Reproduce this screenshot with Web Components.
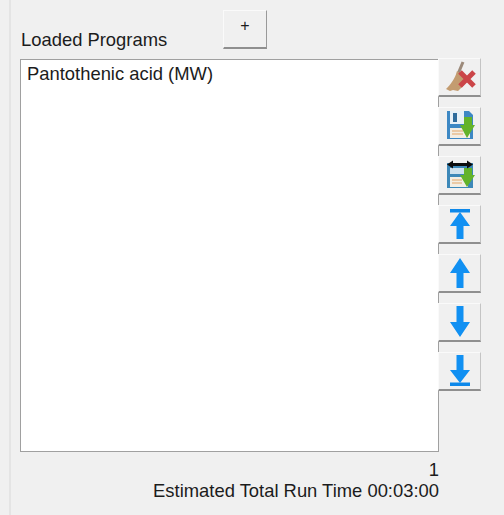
<!DOCTYPE html>
<html>
<head>
<meta charset="utf-8">
<title>Loaded Programs</title>
<style>
  html, body { margin: 0; height: 100%; }
  body { background: #f0f0f0; overflow: hidden; }
  svg { display: block; }
</style>
</head>
<body>
<program-panel>
  <icon-button slot="tools" title="Clear"><svg viewBox="0 0 32 32" width="32" height="32"><path d="M19 1l-5 12" stroke="#9c8a7a" stroke-width="3"/><path d="M13 10l9 7-2 7-6 6-5-1-3 1-4-2C6 24 11 18 13 10z" fill="#c39c70"/><path d="M16 11l14 14M30 11L16 25" stroke="#cb4548" stroke-width="5"/></svg></icon-button>
  <icon-button slot="tools" title="Save"><svg viewBox="0 0 32 32" width="32" height="32"><path d="M3 1h22l4 4v24H3z" fill="#3d88c4"/><path d="M6 1h14v13H6z" fill="#e8f1f7"/><path d="M9 3h4v9H9z" fill="#2f6c9c"/><path d="M6 18h20v10H6z" fill="#f2eee4"/><path d="M8 21h11M8 24h11" stroke="#e3a566"/><path d="M20 7h8v8h3l-8 13-7-13h4z" fill="#63b32a"/></svg></icon-button>
  <icon-button slot="tools" title="Save as"><svg viewBox="0 0 32 32" width="32" height="32"><path d="M3 4h26v25H3z" fill="#3d88b8"/><path d="M6 9h14v6H6z" fill="#cfe2ee"/><path d="M6 18h18v10H6z" fill="#f2eee4"/><path d="M8 21h10M8 24h10" stroke="#e3a566"/><path d="M20 9h8v7h3l-8 12-7-12h4z" fill="#63b32a"/><path d="M3 5.500l6-4v2.500h14V1.500l6 4-6 4V7H9v2.500z" fill="#0c0c0c"/></svg></icon-button>
  <icon-button slot="tools" title="Move to top"><svg viewBox="0 0 32 32" width="32" height="32"><path d="M6 1h20v3.500H6z" fill="#0d88ea"/><path d="M16 4l10 14h-6.500v13h-7V18H6z" fill="#1190f2"/></svg></icon-button>
  <icon-button slot="tools" title="Move up"><svg viewBox="0 0 32 32" width="32" height="32"><path d="M16 1l10 15h-6.500v15h-7V16H6z" fill="#1190f2"/></svg></icon-button>
  <icon-button slot="tools" title="Move down"><svg viewBox="0 0 32 32" width="32" height="32"><path d="M12.500 0h7v16H26L16 31 6 16h6.500z" fill="#1190f2"/></svg></icon-button>
  <icon-button slot="tools" title="Move to bottom"><svg viewBox="0 0 32 32" width="32" height="32"><path d="M12.500 0h7v15H26L16 28 6 15h6.500z" fill="#1190f2"/><path d="M6 27.500h20V31H6z" fill="#0d88ea"/></svg></icon-button>
</program-panel>
<script>
class IconButton extends HTMLElement {
  constructor() {
    super();
    this.attachShadow({ mode: "open" }).innerHTML = `
      <style>
        :host {
          display: flex;
          align-items: center;
          justify-content: center;
          box-sizing: border-box;
          width: 43px;
          height: 39px;
          background: #f0f0f0;
          border-top: 1px solid #fafafa;
          border-left: 1px solid #fafafa;
          border-right: 1px solid #c4c4c4;
          border-bottom: 2px solid #8f8f8f;
        }
        ::slotted(svg) { filter: blur(.4px); }
      </style>
      <slot></slot>`;
  }
}

class ProgramPanel extends HTMLElement {
  constructor() {
    super();
    this.attachShadow({ mode: "open" }).innerHTML = `
      <style>
        :host {
          display: block;
          box-sizing: border-box;
          height: 515px;
          margin-left: 9px;
          border-left: 2px solid #e4e4e4;
          padding: 10px 0 0 9px;
          font: 18.4px "Liberation Sans", Arial, sans-serif;
          color: #1c1c1c;
        }
        .head { display: flex; align-items: flex-end; height: 39px; }
        .head span { width: 203px; padding: 0 0 0 1px; margin-bottom: -1px; box-sizing: border-box; line-height: 20px; }
        .add {
          box-sizing: border-box;
          width: 44px;
          height: 39px;
          padding: 0 0 6px;
          font: 16px "Liberation Sans", Arial, sans-serif;
          color: #1c1c1c;
          background: #f0f0f0;
          border: 0;
          border-top: 1px solid #fafafa;
          border-left: 1px solid #fafafa;
          border-right: 1px solid #999;
          border-bottom: 2px solid #8f8f8f;
        }
        .main { display: flex; margin-top: 10px; }
        .list {
          box-sizing: border-box;
          width: 419px;
          height: 393px;
          padding: 3px 6px;
          background: #fff;
          border: 1px solid #a0a0a0;
          line-height: 21px;
        }
        .tools {
          display: flex;
          flex-direction: column;
          gap: 10px;
          margin-top: -1px;
          margin-left: -1px;
        }
        .foot { width: 419px; text-align: right; line-height: 21px; margin-top: 7px; }
      </style>
      <div class="head"><span>Loaded Programs</span><button class="add">+</button></div>
      <div class="main">
        <div class="list">Pantothenic acid (MW)</div>
        <div class="tools"><slot name="tools"></slot></div>
      </div>
      <div class="foot">1<br>Estimated Total Run Time 00:03:00</div>`;
  }
}

customElements.define("icon-button", IconButton);
customElements.define("program-panel", ProgramPanel);
</script>
</body>
</html>
